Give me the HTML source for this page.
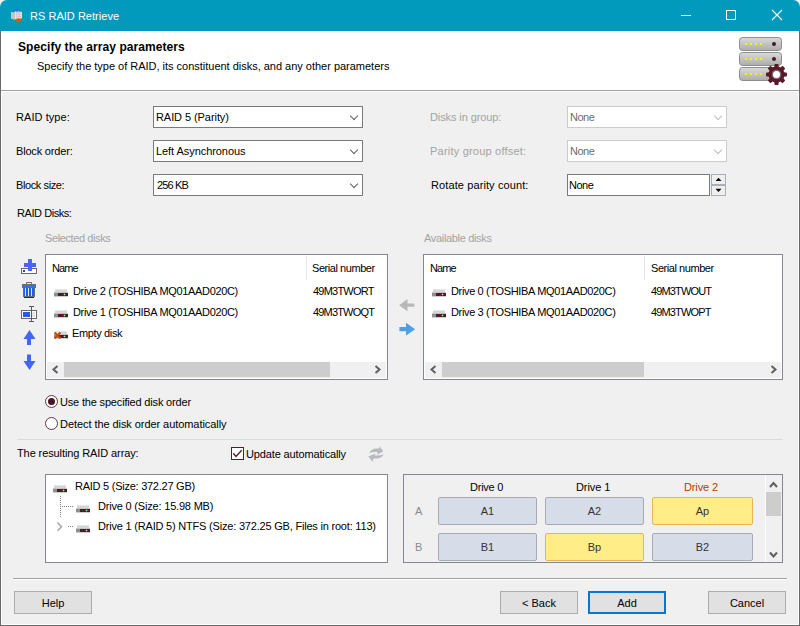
<!DOCTYPE html>
<html><head><meta charset="utf-8">
<style>
html,body{margin:0;padding:0;}
body{width:800px;height:626px;position:relative;overflow:hidden;background:#f0f0f0;font-family:"Liberation Sans",sans-serif;font-size:11px;color:#000;}
.a{position:absolute;}
.t{position:absolute;white-space:nowrap;font-size:11px;line-height:13px;}
.g{color:#a3a3a3;}
#win{position:absolute;left:0;top:0;width:800px;height:626px;background:#f0f0f0;border-radius:7px 7px 0 0;overflow:hidden;}
#title{position:absolute;left:0;top:0;width:800px;height:31px;background:#019abd;}
#hdr{position:absolute;left:0;top:31px;width:800px;height:59px;background:#fff;}
.combo{position:absolute;height:20px;background:#fff;border:1px solid #7a7a7a;}
.combo.dis{border-color:#cccccc;}
.chev{position:absolute;width:5px;height:5px;border-right:1px solid #606060;border-bottom:1px solid #606060;transform:rotate(45deg);}
.dis .chev{border-color:#bcbcbc;}
.list{position:absolute;background:#fff;border:1px solid #828790;}
.btn{position:absolute;height:21px;width:76px;background:#e1e1e1;border:1px solid #adadad;text-align:center;line-height:23px;}
.hs{position:absolute;height:16px;background:#f0f0f0;}
.thumb{position:absolute;top:0;height:15px;background:#cdcdcd;}
.drv{position:absolute;width:14px;height:8px;}
.cell{position:absolute;height:26px;line-height:26px;text-align:center;background:#d6dce8;border:1px solid #a6abb4;border-radius:2px;color:#333;}
.cell.y{background:#ffee88;border-color:#e6b45a;}
</style></head><body>
<svg width="0" height="0" style="position:absolute"><defs>
<symbol id="drive" viewBox="0 0 14 8">
<rect x="1" y="0" width="12" height="1" fill="#e6e6e6"/>
<rect x="1" y="1" width="12" height="2" fill="#d6d6d6"/>
<rect x="0" y="3" width="14" height="1" fill="#c2c4c8"/>
<rect x="0" y="4" width="4" height="3" fill="#8e8e8e"/>
<rect x="4" y="4" width="10" height="3" fill="#5a1628"/>
<rect x="10" y="4" width="1" height="3" fill="#2a7a30"/>
<rect x="9" y="5" width="3" height="1" fill="#2a7a30"/>
<rect x="10" y="5" width="1" height="1" fill="#b0f090"/>
<rect x="0" y="7" width="14" height="1" fill="#cfcfcf"/>
</symbol>
</defs></svg>
<div id="win">
  <div id="title"></div>
  <div id="hdr"></div>
  <!-- borders -->
  <div class="a" style="left:0;top:31px;width:1px;height:595px;background:#6a6a6a"></div>
  <div class="a" style="left:799px;top:31px;width:1px;height:595px;background:#6a6a6a"></div>
  <div class="a" style="left:0;top:625px;width:800px;height:1px;background:#6a6a6a"></div>
  <div class="a" style="left:1px;top:91px;width:1px;height:534px;background:#fff"></div>
  <div class="a" style="left:798px;top:91px;width:1px;height:534px;background:#fff"></div>
  <div class="a" style="left:1px;top:624px;width:798px;height:1px;background:#fff"></div>
  <div class="a" style="left:1px;top:90px;width:798px;height:1px;background:#a0a0a0"></div>
  <div class="a" style="left:1px;top:91px;width:798px;height:1px;background:#fff"></div>
</div>

<!-- title bar text -->
<div class="t" style="left:30px;top:10px;color:#fff;letter-spacing:0.027px">RS RAID Retrieve</div>
<div class="a" style="left:681px;top:15px;width:10px;height:1px;background:#fff"></div>
<div class="a" style="left:726px;top:10px;width:8px;height:8px;border:1px solid #fff"></div>
<svg class="a" style="left:771px;top:9px" width="12" height="12" viewBox="0 0 12 12"><path d="M1 1L11 11M11 1L1 11" stroke="#fff" stroke-width="1.1"/></svg>

<!-- header -->
<div class="t" style="left:18px;top:41px;font-weight:bold;font-size:12px;letter-spacing:0.074px">Specify the array parameters</div>
<div class="t" style="left:37px;top:60px;letter-spacing:-0.014px">Specify the type of RAID, its constituent disks, and any other parameters</div>

<!-- form -->
<div class="t" style="left:16px;top:111px;letter-spacing:0.066px">RAID type:</div>
<div class="t" style="left:16px;top:145px;letter-spacing:-0.181px">Block order:</div>
<div class="t" style="left:16px;top:179px;letter-spacing:-0.400px">Block size:</div>
<div class="t" style="left:17px;top:207px;letter-spacing:-0.440px">RAID Disks:</div>

<div class="combo" style="left:153px;top:106px;width:208px;"><div class="t" style="left:2px;top:4px;letter-spacing:-0.071px">RAID 5 (Parity)</div><div class="chev" style="left:197px;top:6px"></div></div>
<div class="combo" style="left:153px;top:140px;width:208px;"><div class="t" style="left:2px;top:4px;letter-spacing:-0.062px">Left Asynchronous</div><div class="chev" style="left:197px;top:6px"></div></div>
<div class="combo" style="left:153px;top:174px;width:208px;"><div class="t" style="left:3px;top:4px;letter-spacing:-0.840px">256 KB</div><div class="chev" style="left:197px;top:6px"></div></div>

<div class="t g" style="left:430px;top:111px;letter-spacing:-0.100px">Disks in group:</div>
<div class="t g" style="left:430px;top:145px;letter-spacing:0.211px">Parity group offset:</div>
<div class="t" style="left:431px;top:179px;letter-spacing:0.105px">Rotate parity count:</div>

<div class="combo dis" style="left:567px;top:106px;width:158px;"><div class="t" style="left:2px;top:4px;color:#6d6d6d;letter-spacing:-0.500px">None</div><div class="chev" style="left:147px;top:6px"></div></div>
<div class="combo dis" style="left:567px;top:140px;width:158px;"><div class="t" style="left:2px;top:4px;color:#6d6d6d;letter-spacing:-0.500px">None</div><div class="chev" style="left:147px;top:6px"></div></div>
<div class="combo" style="left:567px;top:174px;width:141px;"><div class="t" style="left:1px;top:4px;letter-spacing:-0.500px">None</div></div>


<!-- lists -->
<div class="t g" style="left:45px;top:232px;letter-spacing:-0.400px">Selected disks</div>
<div class="t g" style="left:424px;top:232px;letter-spacing:-0.328px">Available disks</div>

<div class="list" style="left:45px;top:254px;width:341px;height:124px;">
  <div class="t" style="left:6px;top:7px;letter-spacing:-0.867px">Name</div>
  <div class="a" style="left:260px;top:1px;width:1px;height:24px;background:#e5e5e5"></div>
  <div class="t" style="left:266px;top:7px;letter-spacing:-0.442px">Serial number</div>
  <svg class="drv" style="left:8px;top:34px" width="14" height="8"><use href="#drive"/></svg>
  <div class="t" style="left:27px;top:30px;letter-spacing:-0.335px">Drive 2 (TOSHIBA MQ01AAD020C)</div>
  <div class="t" style="left:267px;top:30px;letter-spacing:-0.775px">49M3TWORT</div>
  <svg class="drv" style="left:8px;top:55px" width="14" height="8"><use href="#drive"/></svg>
  <div class="t" style="left:27px;top:51px;letter-spacing:-0.335px">Drive 1 (TOSHIBA MQ01AAD020C)</div>
  <div class="t" style="left:267px;top:51px;letter-spacing:-0.825px">49M3TWOQT</div>
  <svg class="drv" style="left:8px;top:76px" width="14" height="8"><use href="#drive"/></svg>
  <div class="t" style="left:26px;top:72px;letter-spacing:-0.356px">Empty disk</div>
  <div class="hs" style="left:1px;top:107px;width:339px;"><div class="thumb" style="left:17px;width:266px"></div></div>
</div>

<div class="list" style="left:423px;top:254px;width:358px;height:124px;">
  <div class="t" style="left:6px;top:7px;letter-spacing:-0.867px">Name</div>
  <div class="a" style="left:220px;top:1px;width:1px;height:24px;background:#e5e5e5"></div>
  <div class="t" style="left:227px;top:7px;letter-spacing:-0.442px">Serial number</div>
  <svg class="drv" style="left:8px;top:34px" width="14" height="8"><use href="#drive"/></svg>
  <div class="t" style="left:27px;top:30px;letter-spacing:-0.350px">Drive 0 (TOSHIBA MQ01AAD020C)</div>
  <div class="t" style="left:227px;top:30px;letter-spacing:-0.851px">49M3TWOUT</div>
  <svg class="drv" style="left:8px;top:55px" width="14" height="8"><use href="#drive"/></svg>
  <div class="t" style="left:27px;top:51px;letter-spacing:-0.350px">Drive 3 (TOSHIBA MQ01AAD020C)</div>
  <div class="t" style="left:227px;top:51px;letter-spacing:-0.851px">49M3TWOPT</div>
  <div class="hs" style="left:1px;top:107px;width:356px;"><div class="thumb" style="left:17px;width:202px"></div></div>
</div>


<svg class="a" style="left:0;top:0" width="800" height="626" viewBox="0 0 800 626">
<defs>
<linearGradient id="slabg" x1="0" y1="0" x2="0" y2="1"><stop offset="0" stop-color="#dadada"/><stop offset="1" stop-color="#acacac"/></linearGradient>
<linearGradient id="cubeg" x1="0" y1="0" x2="1" y2="0"><stop offset="0" stop-color="#c8c8c8"/><stop offset="1" stop-color="#f4f4f4"/></linearGradient>
</defs>
<!-- title icon -->
<path d="M11,12.5 L16,11 L22,12 L22,18.5 L16,20 L11,18.5Z" fill="#e4e4e4"/>
<path d="M11,12.5 L15,12 L15,19.5 L11,18.5Z" fill="#c4c4c8"/>
<path d="M16,13 L21,12.5 M16,15 L21,14.5 M16,17 L21,16.5" stroke="#b8b8c0" stroke-width="0.8"/>
<path d="M12.5,12 Q14,9.2 16.5,9.4 L16.5,8 L19,10.2 L16.5,12.5 L16.5,11 Q14.5,11 13.5,12.5Z" fill="#3a66ee"/>
<path d="M14.8,19.5 L18,18.2 L22,18.8 L21.5,21 L18,22.6 L15.5,22Z" fill="#d85a12"/>
<!-- header icon -->
<rect x="739.5" y="37.5" width="42" height="13" rx="3" fill="url(#slabg)" stroke="#8e8e8e"/><rect x="745" y="43" width="2" height="2" fill="#f4f400"/><rect x="750" y="43" width="2" height="2" fill="#f4f400"/><rect x="755" y="43" width="2" height="2" fill="#f4f400"/><rect x="760" y="43" width="2" height="2" fill="#f4f400"/><rect x="739.5" y="52.5" width="42" height="13" rx="3" fill="url(#slabg)" stroke="#8e8e8e"/><rect x="745" y="58" width="2" height="2" fill="#f4f400"/><rect x="750" y="58" width="2" height="2" fill="#f4f400"/><rect x="755" y="58" width="2" height="2" fill="#f4f400"/><rect x="760" y="58" width="2" height="2" fill="#f4f400"/><rect x="739.5" y="67.5" width="42" height="13" rx="3" fill="url(#slabg)" stroke="#8e8e8e"/><rect x="745" y="73" width="2" height="2" fill="#f4f400"/><rect x="750" y="73" width="2" height="2" fill="#f4f400"/><rect x="755" y="73" width="2" height="2" fill="#f4f400"/><rect x="760" y="73" width="2" height="2" fill="#f4f400"/>
<circle cx="774" cy="44" r="2" fill="#501424"/>
<circle cx="774" cy="59" r="2" fill="#501424"/>
<path d="M774.27,66.82 L774.68,64.06 L778.32,64.06 L778.73,66.82 L780.35,67.49 L782.60,65.83 L785.17,68.40 L783.51,70.65 L784.18,72.27 L786.94,72.68 L786.94,76.32 L784.18,76.73 L783.51,78.35 L785.17,80.60 L782.60,83.17 L780.35,81.51 L778.73,82.18 L778.32,84.94 L774.68,84.94 L774.27,82.18 L772.65,81.51 L770.40,83.17 L767.83,80.60 L769.49,78.35 L768.82,76.73 L766.06,76.32 L766.06,72.68 L768.82,72.27 L769.49,70.65 L767.83,68.40 L770.40,65.83 L772.65,67.49Z" fill="#5a1828"/>
<circle cx="776.5" cy="74.5" r="4.8" fill="#7a6a70"/>
<circle cx="776.5" cy="74.5" r="3.5" fill="#fff"/>
<!-- add icon -->
<rect x="21.5" y="268.5" width="15" height="5" fill="#fff" stroke="#6a6a6a"/>
<rect x="23" y="270" width="2" height="2" fill="#0a50c0"/>
<rect x="28" y="259" width="4" height="12" fill="#4866f4"/>
<rect x="24" y="263" width="12" height="4" fill="#4866f4"/>
<!-- trash -->
<path d="M26.5,284.5 L26.5,282.5 L31.5,282.5 L31.5,284.5" fill="none" stroke="#6a6a6a"/>
<rect x="22.5" y="284.5" width="13" height="3" fill="#2a78e8" stroke="#7a6a60"/>
<rect x="23.5" y="287.5" width="11" height="9" fill="#1e60e0" stroke="#6a6a70"/>
<rect x="25" y="288" width="1" height="8" fill="#d8e8f8"/>
<rect x="28" y="288" width="1" height="8" fill="#d8e8f8"/>
<rect x="31" y="288" width="1" height="8" fill="#d8e8f8"/>
<rect x="24" y="297" width="10" height="1" fill="#5a1a20"/>
<!-- column icon -->
<rect x="21.5" y="310.5" width="15" height="8" fill="#fff" stroke="#6a6a6a"/>
<rect x="23" y="312" width="7" height="5" fill="#2a58e8"/>
<rect x="32" y="312" width="3" height="5" fill="#e6e6e6"/>
<rect x="31" y="306" width="1" height="16" fill="#5a5a5a"/>
<rect x="29" y="306" width="2" height="1" fill="#5a5a5a"/><rect x="32" y="306" width="2" height="1" fill="#5a5a5a"/>
<rect x="29" y="321" width="2" height="1" fill="#5a5a5a"/><rect x="32" y="321" width="2" height="1" fill="#5a5a5a"/>
<!-- up/down -->
<polygon points="29.5,330 35.5,339 31,339 31,345 27,345 27,339 23.5,339" fill="#4466f2"/>
<polygon points="27,354.5 31,354.5 31,361 35.5,361 29.5,370 23.5,361 27,361" fill="#4466f2"/>
<!-- transfer arrows -->
<polygon points="399,305.2 407.5,299 407.5,303.4 414.3,303.4 414.3,306.8 407.5,306.8 407.5,311.2" fill="#b8b8b8"/>
<polygon points="399.4,326.9 406,326.9 406,322.8 415.1,329.2 406,335.6 406,331.3 399.4,331.3" fill="#4aa0ea"/>
<!-- scroll arrows -->
<path d="M57.5,366 L53.5,369.5 L57.5,373" fill="none" stroke="#606060" stroke-width="2"/>
<path d="M375.5,366 L379.5,369.5 L375.5,373" fill="none" stroke="#606060" stroke-width="2"/>
<path d="M435.5,366 L431.5,369.5 L435.5,373" fill="none" stroke="#606060" stroke-width="2"/>
<path d="M771.5,366 L775.5,369.5 L771.5,373" fill="none" stroke="#606060" stroke-width="2"/>
<!-- radios -->
<circle cx="51.5" cy="401.5" r="6" fill="#fff" stroke="#5a3a48"/>
<circle cx="51.5" cy="401.5" r="3.5" fill="#4a1424"/>
<circle cx="51.5" cy="423.5" r="6" fill="#fff" stroke="#5a3a48"/>
<!-- checkbox -->
<rect x="231.5" y="447.5" width="12" height="12" fill="#fff" stroke="#5a1a28"/>
<path d="M233.3,453.3 L236,456.4 L241.7,450.3" fill="none" stroke="#5a1a28" stroke-width="1.4"/>
<!-- refresh -->
<path d="M369.4,453.2 Q371,448.5 377,448.6 L379.4,448.6 L379.4,446 L383.2,451.2 L377.5,454.7 L377.5,452 Q372,451.5 369.4,453.2Z" fill="#b6babe"/>
<path d="M383.6,454.3 Q382,458.5 376,458.5 L373.5,458.5 L372.7,461.8 L368.2,456.4 L375.5,453.5 L374.5,455.5 Q380,456 383.6,454.3Z" fill="#b6babe"/>
</svg>


<!-- radios & result -->
<div class="t" style="left:60px;top:396px;letter-spacing:-0.171px">Use the specified disk order</div>
<div class="t" style="left:60px;top:418px;letter-spacing:-0.065px">Detect the disk order automatically</div>
<div class="a" style="left:17px;top:439px;width:766px;height:1px;background:#dadada"></div>
<div class="t" style="left:17px;top:447px;letter-spacing:-0.101px">The resulting RAID array:</div>
<div class="t" style="left:246px;top:448px;letter-spacing:-0.137px">Update automatically</div>

<!-- tree -->
<div class="list" style="left:45px;top:474px;width:341px;height:87px;"></div>
<svg class="drv" style="left:53px;top:485px" width="14" height="8"><use href="#drive"/></svg>
<svg class="drv" style="left:76px;top:505px" width="14" height="8"><use href="#drive"/></svg>
<svg class="drv" style="left:76px;top:525px" width="14" height="8"><use href="#drive"/></svg>
<div class="t" style="left:75px;top:480px;letter-spacing:-0.253px">RAID 5 (Size: 372.27 GB)</div>
<div class="t" style="left:98px;top:500px;letter-spacing:-0.191px">Drive 0 (Size: 15.98 MB)</div>
<div class="t" style="left:98px;top:520px;letter-spacing:-0.200px">Drive 1 (RAID 5) NTFS (Size: 372.25 GB, Files in root: 113)</div>
<svg class="a" style="left:0;top:0" width="800" height="626">
<path d="M60.5,496 V518" stroke="#808080" stroke-dasharray="1 1"/>
<path d="M62,506.5 H74" stroke="#808080" stroke-dasharray="1 1"/>
<path d="M68,526.5 H74" stroke="#808080" stroke-dasharray="1 1"/>
<path d="M57.5,522.5 L61.5,526.7 L57.5,530.8" fill="none" stroke="#a6a6a6" stroke-width="1.5"/>
</svg>

<!-- grid -->
<div class="a" style="left:403px;top:474px;width:378px;height:87px;border:1px solid #828790;background:#f0f0f0"></div>
<div class="t" style="left:470px;top:481px;letter-spacing:-0.233px">Drive 0</div>
<div class="t" style="left:576px;top:481px;letter-spacing:-0.083px">Drive 1</div>
<div class="t" style="left:684px;top:481px;color:#b04000;letter-spacing:-0.117px">Drive 2</div>
<div class="t" style="left:415px;top:505px;color:#8a8a8a">A</div>
<div class="t" style="left:415px;top:541px;color:#8a8a8a">B</div>
<div class="cell" style="left:438px;top:497px;width:97px;">A1</div>
<div class="cell" style="left:545px;top:497px;width:97px;">A2</div>
<div class="cell y" style="left:652px;top:497px;width:99px;">Ap</div>
<div class="cell" style="left:438px;top:533px;width:97px;">B1</div>
<div class="cell y" style="left:545px;top:533px;width:97px;">Bp</div>
<div class="cell" style="left:652px;top:533px;width:99px;">B2</div>
<div class="a" style="left:765px;top:475px;width:1px;height:87px;background:#fff"></div>
<div class="a" style="left:766px;top:475px;width:16px;height:87px;background:#f0f0f0"></div>
<div class="a" style="left:766px;top:492px;width:15px;height:24px;background:#cdcdcd"></div>
<svg class="a" style="left:0;top:0" width="800" height="626">
<path d="M770,487 L773.5,483 L777,487" fill="none" stroke="#606060" stroke-width="2"/>
<path d="M770,552.5 L773.5,556.5 L777,552.5" fill="none" stroke="#606060" stroke-width="2"/>
</svg>


<!-- spinner -->
<div class="a" style="left:711px;top:174px;width:13px;height:9px;background:#efefef;border:1px solid #a8aeb8"></div>
<div class="a" style="left:711px;top:185px;width:13px;height:9px;background:#efefef;border:1px solid #a8aeb8"></div>
<svg class="a" style="left:0;top:0" width="800" height="626">
<polygon points="715.5,181 718.5,177.8 721.5,181" fill="#000"/>
<polygon points="715.5,188.8 718.5,192 721.5,188.8" fill="#000"/>
<!-- empty disk X -->
<path d="M54.5,332.5 L60.5,338.5 M60.5,332.5 L54.5,338.5" stroke="#c04e08" stroke-width="2"/>
</svg>

<!-- buttons -->
<div class="a" style="left:13px;top:578px;width:774px;height:1px;background:#a0a0a0"></div>
<div class="a" style="left:13px;top:579px;width:774px;height:1px;background:#fff"></div>
<div class="btn" style="left:14px;top:591px;">Help</div>
<div class="btn" style="left:500px;top:591px;">&lt; Back</div>
<div class="btn" style="left:588px;top:591px;border:2px solid #0078d7;width:74px;height:19px;line-height:21px;">Add</div>
<div class="btn" style="left:708px;top:591px;">Cancel</div>

</body></html>
